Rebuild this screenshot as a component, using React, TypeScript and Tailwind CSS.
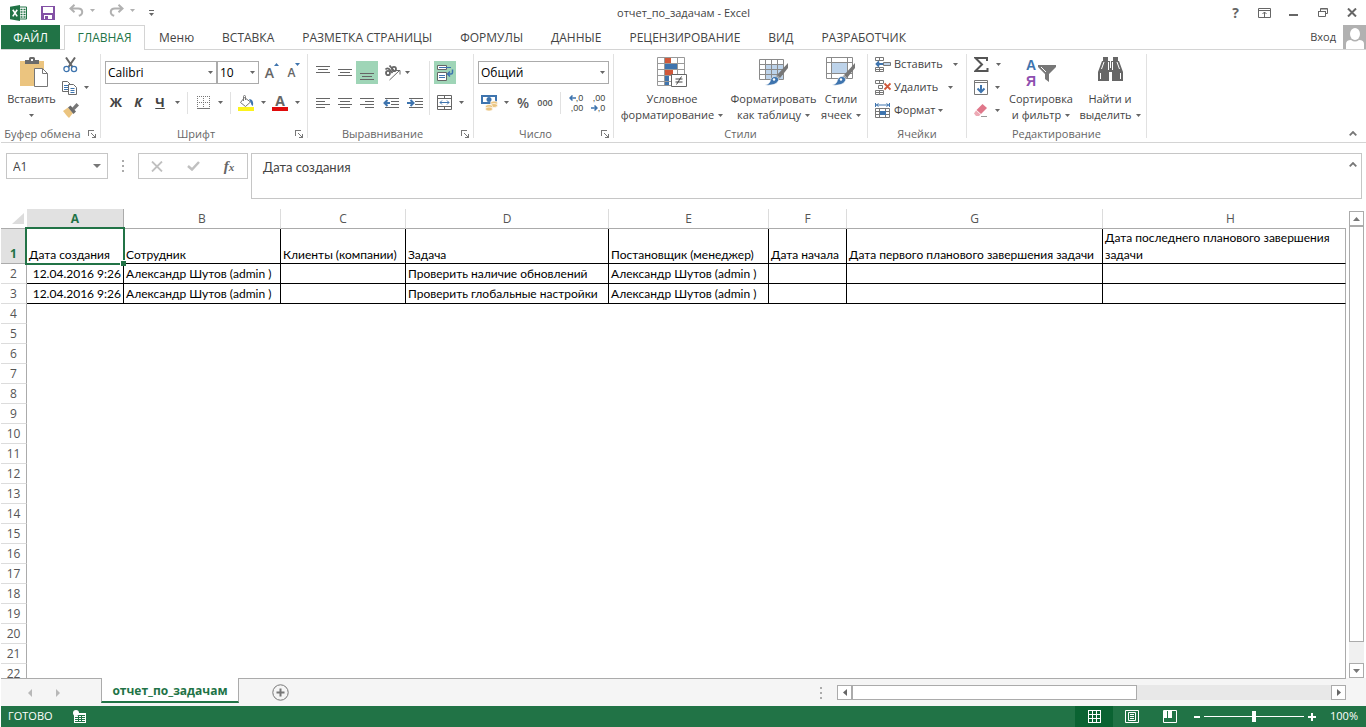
import React from 'react';
import type { ReactNode } from 'react';

const MENU_TABS = ['Меню', 'ВСТАВКА', 'РАЗМЕТКА СТРАНИЦЫ', 'ФОРМУЛЫ', 'ДАННЫЕ', 'РЕЦЕНЗИРОВАНИЕ', 'ВИД', 'РАЗРАБОТЧИК'];

const COLUMNS = [
  { id: 'A', width: 'w-[97px]' },
  { id: 'B', width: 'w-[157px]' },
  { id: 'C', width: 'w-[125px]' },
  { id: 'D', width: 'w-[203px]' },
  { id: 'E', width: 'w-[160px]' },
  { id: 'F', width: 'w-[78px]' },
  { id: 'G', width: 'w-[256px]' },
  { id: 'H', width: '' },
];

const HEADINGS = [
  'Дата создания',
  'Сотрудник',
  'Клиенты (компании)',
  'Задача',
  'Постановщик (менеджер)',
  'Дата начала',
  'Дата первого планового завершения задачи',
  'Дата последнего планового завершения задачи',
];

const ROWS = [
  ['12.04.2016 9:26', 'Александр Шутов (admin )', '', 'Проверить наличие обновлений', 'Александр Шутов (admin )', '', '', ''],
  ['12.04.2016 9:26', 'Александр Шутов (admin )', '', 'Проверить глобальные настройки', 'Александр Шутов (admin )', '', '', ''],
];

const EMPTY_ROWS = Array.from({ length: 19 }, (_, i) => i + 4);

/* ---------- small shared pieces ---------- */

function Arrow({ className = 'text-[#666]' }: { className?: string }) {
  return (
    <svg width="5" height="3" viewBox="0 0 5 3" className={`shrink-0 ${className}`} aria-hidden="true">
      <path d="M0 0h5L2.5 3z" fill="currentColor" />
    </svg>
  );
}

function Launcher({ label }: { label: string }) {
  return (
    <button type="button" aria-label={label} className="flex h-4 w-4 items-center justify-center text-[#777]">
      <svg width="8" height="8" viewBox="0 0 8 8" fill="none" stroke="currentColor" shapeRendering="crispEdges">
        <path d="M0.5 6V0.5H6M7.5 4v3.5H4" />
        <path d="M3 3l4 4" shapeRendering="auto" />
      </svg>
    </button>
  );
}

function Group({ label, width, launcher, children }: { label: string; width: string; launcher?: boolean; children: ReactNode }) {
  return (
    <section aria-label={label} className={`flex shrink-0 ${width}`}>
      <div className="flex min-w-0 flex-1 flex-col">
        <div className="flex h-[76px] pt-[3px]">{children}</div>
        <div className="flex h-4 items-center">
          <span className="flex-1 text-center text-[11px] leading-4 whitespace-nowrap text-[#666]">{label}</span>
          {launcher && <Launcher label={`Параметры: ${label}`} />}
        </div>
      </div>
      <div className="my-1 w-px bg-[#e1e1e1]" />
    </section>
  );
}

function Divider({ className = '' }: { className?: string }) {
  return <div className={`w-px shrink-0 bg-[#e1e1e1] ${className}`} />;
}

function Tool({ label, width = 'w-[22px]', active, children }: { label: string; width?: string; active?: boolean; children: ReactNode }) {
  return (
    <button
      type="button"
      aria-label={label}
      className={`flex h-[23px] shrink-0 items-center justify-center ${width} ${active ? 'bg-[#9fd5b7]' : ''}`}
    >
      {children}
    </button>
  );
}

function BigButton({ icon, lines, width }: { icon: ReactNode; lines: [string, string]; width: string }) {
  return (
    <button type="button" className={`flex shrink-0 flex-col items-center pt-1 text-[#444] ${width}`}>
      <span className="flex h-[34px] items-start justify-center">{icon}</span>
      <span className="leading-4 whitespace-nowrap">{lines[0]}</span>
      <span className="flex items-center gap-1 leading-4 whitespace-nowrap">
        {lines[1]}
        <Arrow />
      </span>
    </button>
  );
}

function Combo({ label, value, width }: { label: string; value: string; width: string }) {
  return (
    <div className={`relative h-[23px] shrink-0 ${width}`}>
      <select aria-label={label} defaultValue={value} className="h-full w-full appearance-none border border-[#ababab] bg-white pl-0.5 text-xs text-black outline-none">
        <option>{value}</option>
      </select>
      <Arrow className="pointer-events-none absolute top-2.5 right-1 text-[#666]" />
    </div>
  );
}

/* ---------- icons ---------- */

const ExcelLogo = () => (
  <svg width="17" height="16" viewBox="0 0 17 16">
    <path d="M9 2h7.5v12H9z" fill="#fff" stroke="#217346" />
    <path d="M10.5 4.5h2M13.5 4.5h2M10.5 7h2M13.5 7h2M10.5 9.5h2M13.5 9.5h2M10.5 12h2M13.5 12h2" stroke="#217346" strokeWidth="1.3" />
    <path d="M0 1.8L10 0v16L0 14.2z" fill="#217346" />
    <path d="M2.8 4.8l4.4 6.6M7.2 4.8l-4.4 6.6" stroke="#fff" strokeWidth="1.6" />
  </svg>
);

const SaveIcon = () => (
  <svg width="14" height="14" viewBox="0 0 14 14">
    <path d="M0 0h14v14H0z" fill="#8351a5" />
    <path d="M2 1h10v6H2zM3 9h8v4H3z" fill="#fff" />
    <path d="M4 10h3v3H4z" fill="#8351a5" />
  </svg>
);

const UndoIcon = ({ flip }: { flip?: boolean }) => (
  <svg width="15" height="13" viewBox="0 0 15 13" fill="none" stroke="#b1b1b1" strokeWidth="2" className={flip ? '-scale-x-100' : ''}>
    <path d="M5.5 0.8L1.5 4.5l4 3.7M1.8 4.5h7.4c5 0 5.5 5.8.6 7.3" />
  </svg>
);

const PasteIcon = () => (
  <svg width="28" height="31" viewBox="0 0 28 31">
    <path d="M0 4h24v25H0z" fill="#ebc47f" />
    <path d="M5 7V3h4V1.500Q9 0 10.500 0h3Q15 0 15 1.500V3h4v4z" fill="#6b6b6b" />
    <path d="M11 2h2v2h-2z" fill="#fff" />
    <path d="M14.500 11.500h8l5 5v13h-13z" fill="#fff" stroke="#777" />
    <path d="M22.500 11.500v5h5" fill="none" stroke="#777" />
  </svg>
);

const CutIcon = () => (
  <svg width="15" height="16" viewBox="0 0 15 16" fill="none">
    <path d="M3 0.500l6.500 9.500M12 0.500L5.500 10" stroke="#666" strokeWidth="2" />
    <circle cx="3.500" cy="12" r="2.600" stroke="#3e74ae" strokeWidth="1.300" />
    <circle cx="11" cy="12" r="2.600" stroke="#3e74ae" strokeWidth="1.300" />
  </svg>
);

const CopyIcon = () => (
  <svg width="16" height="14" viewBox="0 0 16 14" fill="#fff" stroke="#6b6b6b">
    <path d="M0.500 0.500h5l3 3v7h-8z" />
    <path d="M2 4.500h4M2 6.500h4M2 8.500h4" stroke="#3e74ae" />
    <path d="M6.500 3.500h5l3 3v7h-8z" />
    <path d="M8.500 7.500h4M8.500 9.500h4M8.500 11.500h4" stroke="#3e74ae" />
  </svg>
);

const BrushIcon = () => (
  <svg width="16" height="15" viewBox="0 0 16 15">
    <path d="M0 8l5-3.500 5 5.500-4 5-2-2z" fill="#ebc47f" />
    <path d="M5 4.500l2.500-2 5.500 6-2.500 2.500z" fill="#6b6b6b" />
    <path d="M9 5l4.500-5L16 2.500 11.500 7z" fill="#777" />
  </svg>
);

const GrowFont = ({ down }: { down?: boolean }) => (
  <span className="flex items-start text-[#666]">
    <span className={`font-semibold ${down ? 'text-xs leading-5' : 'text-sm leading-5'}`}>A</span>
    <svg width="5" height="4" viewBox="0 0 5 4" fill="#3e74ae">
      <path d={down ? 'M0 0h5L2.500 3z' : 'M0 3h5L2.500 0z'} />
    </svg>
  </span>
);

const BordersIcon = () => (
  <svg width="13" height="13" viewBox="0 0 13 13" stroke="#777" fill="none" shapeRendering="crispEdges">
    <path d="M0 0.500h13M0 6.500h13M0.500 0v12M6.500 0v12M12.500 0v12" strokeDasharray="1 1" />
    <path d="M0 12.500h13" />
  </svg>
);

const FillIcon = () => (
  <svg width="16" height="16" viewBox="0 0 16 16" fill="none">
    <path d="M0 12h16v4H0z" fill="#fcf31c" />
    <path d="M6.500 2.500l6 4.500-5 4.500L2.500 7.500z" fill="#fff" stroke="#777" />
    <path d="M5.500 6V1.500Q5.500.5 6.500.5T7.500 1.500V5" stroke="#777" />
    <path d="M11 4q5 0 4 7-2-1-2.500-4z" fill="#3e74ae" />
  </svg>
);

const FontColorIcon = () => (
  <span className="flex flex-col items-center">
    <span className="text-sm leading-3 font-bold text-[#666]">А</span>
    <span className="h-1 w-4 bg-[#e00b0b]" />
  </span>
);

const LINE_PATHS = {
  top: 'M0 1.500h14M2 4.500h10M0 7.500h14',
  middle: 'M0 4.500h14M2 7.500h10M0 10.500h14',
  bottom: 'M0 8.500h14M2 11.500h10M0 14.500h14',
  left: 'M0 3.500h14M0 6.500h9M0 9.500h14M0 12.500h9',
  center: 'M0 3.500h14M2 6.500h10M0 9.500h14M2 12.500h10',
  right: 'M0 3.500h14M5 6.500h9M0 9.500h14M5 12.500h9',
};

const LinesIcon = ({ kind }: { kind: keyof typeof LINE_PATHS }) => (
  <svg width="14" height="16" viewBox="0 0 14 16" stroke="#666" shapeRendering="crispEdges">
    <path d={LINE_PATHS[kind]} />
  </svg>
);

const IndentIcon = ({ out }: { out?: boolean }) => (
  <svg width="17" height="12" viewBox="0 0 17 12" fill="none">
    <path d="M2 1.500h14M8 4.500h8M8 7.500h8M2 10.500h14" stroke="#666" shapeRendering="crispEdges" />
    <path d="M0 3h7v6H0z" fill="#fff" />
    <path d={out ? 'M4.500 3L1.500 6l3 3M1.500 6H7' : 'M3.500 3l3 3-3 3M0 6h6.500'} stroke="#3e74ae" strokeWidth="2" />
  </svg>
);

const OrientationIcon = () => (
  <svg width="17" height="16" viewBox="0 0 17 16" fill="none" stroke="#666">
    <ellipse cx="4" cy="8" rx="2" ry="2.200" strokeWidth="1.800" />
    <path d="M1.500 4.500q1.500-2 3.500-.5L8.500 8" strokeWidth="1.800" />
    <path d="M5.500.500l5 6" strokeWidth="1.800" />
    <ellipse cx="10" cy="4" rx="2" ry="2.200" strokeWidth="1.800" />
    <path d="M5.500 15L15.500 5.500M12 5.500h4v4" />
  </svg>
);

const WrapIcon = () => (
  <svg width="17" height="16" viewBox="0 0 17 16" fill="none">
    <path d="M.5.500h9v4h-9zM.5 7.500h9v8h-9z" fill="#fff" stroke="#666" />
    <path d="M2 2.500h12M2 10.500h6M2 12.500h6" stroke="#3e74ae" />
    <path d="M15.500 4.500v3q0 1.500-1.500 1.500h-3M13 6.500L10.500 9l2.500 2.500" stroke="#3e74ae" strokeWidth="1.500" />
  </svg>
);

const MergeIcon = () => (
  <svg width="16" height="15" viewBox="0 0 16 15" fill="none" stroke="#666">
    <path d="M.5.500h14v14H.5zM0 3.500h15M0 11.500h15M7.500 0v3.500M7.500 11.500V15" />
    <path d="M3 7.500h9M5 5.500l-2 2 2 2M10 5.500l2 2-2 2" stroke="#3e74ae" />
  </svg>
);

const MoneyIcon = () => (
  <svg width="17" height="16" viewBox="0 0 17 16">
    <path d="M0 0h16v9H0z" fill="#3e74ae" />
    <path d="M2 2h12v5H2z" fill="#fff" />
    <circle cx="8" cy="4.500" r="2.500" fill="#3e74ae" />
    <ellipse cx="13" cy="8" rx="3.500" ry="2" fill="#ebc47f" stroke="#fff" strokeWidth=".7" />
    <ellipse cx="13" cy="10.500" rx="3.500" ry="2" fill="#ebc47f" stroke="#fff" strokeWidth=".7" />
    <ellipse cx="8" cy="11.500" rx="3.500" ry="2" fill="#ebc47f" stroke="#fff" strokeWidth=".7" />
    <ellipse cx="8" cy="14" rx="3.500" ry="2" fill="#ebc47f" stroke="#fff" strokeWidth=".7" />
  </svg>
);

const ArrowStroke = ({ right }: { right?: boolean }) => (
  <svg width="7" height="6" viewBox="0 0 7 6" fill="none" stroke="#3e74ae" strokeWidth="1.500" className={right ? '-scale-x-100' : ''}>
    <path d="M3.500.5L1 3l2.500 2.500M1 3h6" />
  </svg>
);

const DecimalIcon = ({ less }: { less?: boolean }) => (
  <span className="flex flex-col font-['Liberation_Sans',sans-serif] text-[9px] leading-[10px] text-[#444]">
    <span className="flex items-center justify-end">
      {!less && <ArrowStroke />}
      {less ? ',00' : ',0'}
    </span>
    <span className="flex items-center justify-end">
      {less && <ArrowStroke right />}
      {less ? ',0' : ',00'}
    </span>
  </span>
);

const ConditionalIcon = () => (
  <svg width="30" height="30" viewBox="0 0 30 30">
    <path d="M.5.500h27v23H.5z" fill="#fff" />
    <path d="M8 1h6v5H8z" fill="#d0583a" />
    <path d="M8 7h12v5H8z" fill="#3e74ae" />
    <path d="M8 13h8v5H8z" fill="#d0583a" />
    <path d="M8 19h4v10H8z" fill="#3e74ae" />
    <path d="M.5.500h27v28H.5zM7.500 0v29M20.500 0v29M0 6.500h28M0 12.500h28M0 18.500h28M0 24.500h28" fill="none" stroke="#999" />
    <path d="M14.500 17.500h15v12h-15z" fill="#fff" stroke="#666" />
    <path d="M18.500 22h7M18.500 25h7M24.500 19.500l-5 8" stroke="#444" />
  </svg>
);

const BrushOver = () => (
  <>
    <path d="M29 6v5l-8 10-3-3z" fill="#777" />
    <path d="M18 18l3 3-2 2-3-3z" fill="#999" />
    <path d="M15 19.500q5 0 4.500 4Q17 29 6 28q5-1 5.500-5 1-3 3.500-3.500z" fill="#3e74ae" stroke="#fff" strokeWidth=".5" />
    <circle cx="15" cy="22.500" r="1.200" fill="#fff" />
  </>
);

const FormatTableIcon = () => (
  <svg width="30" height="30" viewBox="0 0 30 30">
    <path d="M.5 2.500h24v19H.5z" fill="#fff" />
    <path d="M7 8h17v14H7z" fill="#bdd3ea" />
    <path d="M.5 2.500h24v20H.5zM6.500 2v20M12.500 2v20M18.500 2v20M0 7.500h25M0 12.500h25M0 17.500h25" fill="none" stroke="#8a8a8a" />
    <BrushOver />
  </svg>
);

const CellStylesIcon = () => (
  <svg width="30" height="30" viewBox="0 0 30 30">
    <path d="M.5.500h26v21H.5z" fill="#fff" />
    <path d="M6 6h15v10H6z" fill="#bdd3ea" />
    <path d="M.5.500h26v21H.5zM5.500 0v22M21.500 0v22M0 5.500h27M0 16.500h27" fill="none" stroke="#8a8a8a" />
    <BrushOver />
  </svg>
);

const InsertCellsIcon = () => (
  <svg width="16" height="15" viewBox="0 0 16 15" fill="none" stroke="#777">
    <path d="M.5.500h8v3h-8zM4.500 0v4M.5 10.500h8v4h-8zM4.500 10v5M0 12.500h8" />
    <path d="M8.500 5.500h7v3h-7z" fill="#bdd3ea" />
    <path d="M4 4.500L1.500 7 4 9.500M1.500 7H8" stroke="#3e74ae" strokeWidth="1.800" />
  </svg>
);

const DeleteCellsIcon = () => (
  <svg width="16" height="15" viewBox="0 0 16 15" fill="none" stroke="#777">
    <path d="M.5.500h8v3h-8zM4.500 0v4M3.500 5.500h4v3h-4zM.5 10.500h8v4h-8zM4.500 10v5M0 12.500h8" />
    <path d="M9.500 3.500l6 6M15.500 3.500l-6 6" stroke="#d0583a" strokeWidth="1.800" />
  </svg>
);

const FormatCellsIcon = () => (
  <svg width="16" height="16" viewBox="0 0 16 16" fill="none" stroke="#777">
    <path d="M.5 0v4M14.500 0v4M1 2h13M3.500 0.500L1.500 2l2 1.500M11.500.5l2 1.500-2 1.500" stroke="#3e74ae" />
    <path d="M.5 5.500h14v9H.5zM4.500 5v10M10.500 5v10M0 8.500h15M0 11.500h15" />
    <path d="M5 8h6v4H5z" fill="#3e74ae" stroke="none" />
  </svg>
);

const SumIcon = () => (
  <svg width="15" height="15" viewBox="0 0 15 15" fill="none" stroke="#555" strokeWidth="2">
    <path d="M13 4V1H1.500L8 7.500 1.500 14H13.500v-3" />
  </svg>
);

const FillDownIcon = () => (
  <svg width="14" height="15" viewBox="0 0 14 15" fill="none">
    <path d="M.5.500h13v14H.5zM0 2.500h14" stroke="#777" />
    <path d="M7 5v7M3.500 8.500L7 12l3.500-3.500" stroke="#3e74ae" strokeWidth="2" />
  </svg>
);

const EraserIcon = () => (
  <svg width="14" height="13" viewBox="0 0 14 13">
    <path d="M8.500 0L13 4 7 10 2.500 6z" fill="#e0778a" />
    <path d="M2 6.500L6.500 10.500 5 12H2L0 9.500z" fill="#edaab5" />
    <path d="M7 12.500h6" stroke="#999" />
  </svg>
);

const SortIcon = () => (
  <span className="flex items-center gap-0.5">
    <span className="flex flex-col font-['Liberation_Sans',sans-serif] text-sm leading-4 font-bold">
      <span className="text-[#3e74ae]">А</span>
      <span className="text-[#8f4fb0]">Я</span>
    </span>
    <svg width="18" height="17" viewBox="0 0 18 17">
      <path d="M0 0h18v2l-7 7v8l-4-3V9L0 2z" fill="#777" />
      <path d="M3 2l5 5" stroke="#fff" />
    </svg>
  </span>
);

const BinocularsIcon = () => (
  <svg width="27" height="25" viewBox="0 0 27 25" fill="#666">
    <path d="M6 0h5v4h2v7h1V4h2V0h5v4h1l4 11v9H15v-9h-3v9H1v-9L5 4h1z" />
    <path d="M3.500 16v6M23.500 16v6M7 5L4.500 12M20 5l2.500 7M11.500 5v8M15.500 5v8" stroke="#fff" />
  </svg>
);

const CollapseIcon = () => (
  <svg width="8" height="5" viewBox="0 0 8 5" fill="none" stroke="#777" strokeWidth="1.800">
    <path d="M.7 4.300L4 1l3.300 3.300" />
  </svg>
);

const Dots = () => (
  <svg width="2" height="12" viewBox="0 0 2 12" fill="#ababab">
    <path d="M0 0h2v2H0zM0 5h2v2H0zM0 10h2v2H0z" />
  </svg>
);

/* ---------- window sections ---------- */

function TitleBar() {
  return (
    <header className="grid h-[25px] shrink-0 grid-cols-[1fr_auto_1fr] items-center text-[#666]">
      <div className="flex items-center pl-[9px]">
        <ExcelLogo />
        <button type="button" aria-label="Сохранить" className="ml-[14px]"><SaveIcon /></button>
        <button type="button" aria-label="Отменить" className="ml-[14px] flex items-center gap-[6px] pb-1">
          <UndoIcon />
          <Arrow className="text-[#b1b1b1]" />
        </button>
        <button type="button" aria-label="Вернуть" className="ml-[14px] flex items-center gap-[6px] pb-1">
          <UndoIcon flip />
          <Arrow className="text-[#b1b1b1]" />
        </button>
        <button type="button" aria-label="Настройка панели быстрого доступа" className="ml-[14px] flex flex-col items-center gap-0.5">
          <span className="h-px w-[5px] bg-[#666]" />
          <Arrow />
        </button>
      </div>
      <h1 className="pt-0.5 text-[11px] text-[#444]">отчет_по_задачам - Excel</h1>
      <div className="flex items-center justify-end pr-[9px]">
        <button type="button" className="w-[29px] text-sm leading-5 font-bold" aria-label="Справка">?</button>
        <button type="button" aria-label="Параметры ленты" className="flex w-[29px] justify-center">
          <svg width="13" height="10" viewBox="0 0 13 10" fill="none" stroke="#666">
            <path d="M.5.500h12v9H.5zM0 2.500h13M6.500 4v5M4.500 6l2-2 2 2" />
          </svg>
        </button>
        <button type="button" aria-label="Свернуть" className="flex w-[29px] justify-center">
          <span className="mt-1 h-0.5 w-[9px] bg-[#666]" />
        </button>
        <button type="button" aria-label="Восстановить" className="flex w-[29px] justify-center">
          <svg width="10" height="9" viewBox="0 0 10 9" fill="none" stroke="#666">
            <path d="M.5 3.500h7v5h-7zM2.500 3V.5h7v5H8M0 3.500h8M2.500 1h7" />
          </svg>
        </button>
        <button type="button" aria-label="Закрыть" className="flex w-5 justify-end">
          <svg width="10" height="9" viewBox="0 0 10 9" stroke="#666" strokeWidth="2">
            <path d="M1 .5l8 8M9 .5l-8 8" />
          </svg>
        </button>
      </div>
    </header>
  );
}

function RibbonTabs() {
  return (
    <nav className="flex h-[25px] shrink-0 text-xs text-[#444]">
      <button type="button" className="w-[59px] border-b border-[#d4d4d4] bg-[#217346] pt-px text-white">ФАЙЛ</button>
      <div className="w-1 border-b border-[#d4d4d4]" />
      <button type="button" className="w-[81px] border border-b-0 border-[#d4d4d4] text-[#217346]">ГЛАВНАЯ</button>
      {MENU_TABS.map((tab) => (
        <button key={tab} type="button" className="border-b border-[#d4d4d4] px-[14px] pt-0.5 whitespace-nowrap">{tab}</button>
      ))}
      <div className="flex flex-1 items-center justify-end gap-[7px] border-b border-[#d4d4d4]">
        <a href="#signin" className="text-[11px]">Вход</a>
        <svg width="23" height="24" viewBox="0 0 23 24">
          <path d="M0 0h23v24H0z" fill="#b1b1b1" />
          <ellipse cx="12" cy="9" rx="5" ry="6" fill="#fff" />
          <path d="M3 24v-5q0-4 5-4 4 3 8 0 5 0 5 4v5z" fill="#fff" />
        </svg>
      </div>
    </nav>
  );
}

function Ribbon() {
  return (
    <div className="flex h-[93px] shrink-0 overflow-hidden border-b border-[#d4d4d4] text-[11px]">
      <Group label="Буфер обмена" width="w-[100px]" launcher>
        <button type="button" className="flex w-[61px] flex-col items-center pt-1 text-[#444]">
          <span className="flex h-[34px] items-start pl-1"><PasteIcon /></span>
          <span className="leading-4">Вставить</span>
          <span className="flex h-4 items-center"><Arrow /></span>
        </button>
        <div className="flex flex-col">
          <Tool label="Вырезать" width="w-[17px]"><CutIcon /></Tool>
          <button type="button" aria-label="Копировать" className="flex h-[23px] items-center gap-1.5">
            <CopyIcon />
            <Arrow />
          </button>
          <Tool label="Формат по образцу" width="w-[17px]"><BrushIcon /></Tool>
        </div>
      </Group>

      <Group label="Шрифт" width="w-[207px]" launcher>
        <div className="flex flex-col gap-[7px] pt-2 pl-1">
          <div className="flex">
            <Combo label="Шрифт" value="Calibri" width="w-[112px]" />
            <Combo label="Размер шрифта" value="10" width="w-[42px]" />
            <Tool label="Увеличить размер шрифта" width="w-[26px]"><GrowFont /></Tool>
            <Tool label="Уменьшить размер шрифта" width="w-[18px]"><GrowFont down /></Tool>
          </div>
          <div className="flex items-center">
            <Tool label="Полужирный"><b className="text-[13px] text-[#444]">Ж</b></Tool>
            <Tool label="Курсив"><b className="text-[13px] text-[#444] italic">К</b></Tool>
            <Tool label="Подчеркнутый"><b className="text-[13px] text-[#444] underline">Ч</b></Tool>
            <Tool label="Вид подчеркивания" width="w-3"><Arrow /></Tool>
            <Divider className="mx-1 h-[22px]" />
            <Tool label="Границы"><BordersIcon /></Tool>
            <Tool label="Вид границ" width="w-3"><Arrow /></Tool>
            <Divider className="mx-1 h-[22px]" />
            <Tool label="Цвет заливки"><FillIcon /></Tool>
            <Tool label="Выбор цвета заливки" width="w-3"><Arrow /></Tool>
            <Tool label="Цвет шрифта"><FontColorIcon /></Tool>
            <Tool label="Выбор цвета шрифта" width="w-3"><Arrow /></Tool>
          </div>
        </div>
      </Group>

      <Group label="Выравнивание" width="w-[166px]" launcher>
        <div className="flex flex-col gap-[7px] pt-2 pl-1">
          <div className="flex w-[117px]">
            <Tool label="По верхнему краю"><LinesIcon kind="top" /></Tool>
            <Tool label="По середине"><LinesIcon kind="middle" /></Tool>
            <Tool label="По нижнему краю" active><LinesIcon kind="bottom" /></Tool>
            <Tool label="Ориентация" width="w-[38px]">
              <span className="flex items-center gap-1"><OrientationIcon /><Arrow /></span>
            </Tool>
          </div>
          <div className="flex w-[117px]">
            <Tool label="По левому краю"><LinesIcon kind="left" /></Tool>
            <Tool label="По центру"><LinesIcon kind="center" /></Tool>
            <Tool label="По правому краю"><LinesIcon kind="right" /></Tool>
            <Tool label="Уменьшить отступ" width="w-[26px]"><IndentIcon out /></Tool>
            <Tool label="Увеличить отступ"><IndentIcon /></Tool>
          </div>
        </div>
        <Divider className="mt-2 mr-1 h-[54px]" />
        <div className="flex flex-col gap-[7px] pt-2">
          <Tool label="Перенести текст" active><WrapIcon /></Tool>
          <button type="button" aria-label="Объединить" className="flex h-[23px] items-center gap-1.5 pl-[3px]">
            <MergeIcon />
            <Arrow />
          </button>
        </div>
      </Group>

      <Group label="Число" width="w-[140px]" launcher>
        <div className="flex flex-col gap-[7px] pt-2 pl-1">
          <Combo label="Числовой формат" value="Общий" width="w-[131px]" />
          <div className="flex items-center">
            <Tool label="Финансовый формат"><MoneyIcon /></Tool>
            <Tool label="Выбор валюты" width="w-3"><Arrow /></Tool>
            <Tool label="Процентный формат"><span className="text-sm font-semibold text-[#555]">%</span></Tool>
            <Tool label="Формат с разделителями"><span className="text-[9px] font-semibold text-[#555]">000</span></Tool>
            <Divider className="mx-1 h-[22px]" />
            <Tool label="Увеличить разрядность"><DecimalIcon /></Tool>
            <Tool label="Уменьшить разрядность"><DecimalIcon less /></Tool>
          </div>
        </div>
      </Group>

      <Group label="Стили" width="w-[254px]">
        <BigButton icon={<ConditionalIcon />} lines={['Условное', 'форматирование']} width="w-[116px]" />
        <BigButton icon={<FormatTableIcon />} lines={['Форматировать', 'как таблицу']} width="w-[87px]" />
        <BigButton icon={<CellStylesIcon />} lines={['Стили', 'ячеек']} width="w-[48px]" />
      </Group>

      <Group label="Ячейки" width="w-[99px]">
        <div className="flex flex-col pl-[7px] text-[#444]">
          <button type="button" className="flex h-[23px] items-center gap-[3px]">
            <InsertCellsIcon /> Вставить <Arrow className="ml-[7px] text-[#666]" />
          </button>
          <button type="button" className="flex h-[23px] items-center gap-[3px]">
            <DeleteCellsIcon /> Удалить <Arrow className="ml-[7px] text-[#666]" />
          </button>
          <button type="button" className="flex h-[23px] items-center gap-[3px]">
            <FormatCellsIcon /> Формат <Arrow />
          </button>
        </div>
      </Group>

      <Group label="Редактирование" width="w-[180px]">
        <div className="flex flex-col pl-[7px]">
          <button type="button" aria-label="Автосумма" className="flex h-[23px] items-center gap-[7px]"><SumIcon /><Arrow /></button>
          <button type="button" aria-label="Заполнить" className="flex h-[23px] items-center gap-[7px]"><FillDownIcon /><Arrow /></button>
          <button type="button" aria-label="Очистить" className="flex h-[23px] items-center gap-[7px]"><EraserIcon /><Arrow /></button>
        </div>
        <BigButton icon={<SortIcon />} lines={['Сортировка', 'и фильтр']} width="w-[80px]" />
        <BigButton icon={<BinocularsIcon />} lines={['Найти и', 'выделить']} width="w-[58px]" />
      </Group>

      <div className="flex flex-1 items-end justify-end pr-[9px] pb-1.5">
        <button type="button" aria-label="Свернуть ленту"><CollapseIcon /></button>
      </div>
    </div>
  );
}

function FormulaBar() {
  return (
    <div className="flex h-[66px] shrink-0 items-start pt-2.5 pr-1 pl-[5px] text-xs text-[#444]">
      <div className="flex h-[26px] w-[102px] items-center border border-[#c6c6c6] pr-1.5 pl-1.5">
        <input aria-label="Поле имени" defaultValue="A1" className="w-full min-w-0 pt-0.5 outline-none" />
        <button type="button" aria-label="Имена">
          <svg width="8" height="4" viewBox="0 0 8 4"><path d="M0 0h8L4 4z" fill="#777" /></svg>
        </button>
      </div>
      <div className="flex h-[26px] w-[30px] items-center justify-center"><Dots /></div>
      <div className="flex h-[26px] w-[110px] items-center border border-[#c6c6c6]">
        <button type="button" aria-label="Отмена" className="flex flex-1 justify-center">
          <svg width="12" height="11" viewBox="0 0 12 11" stroke="#c0c0c0" strokeWidth="1.800"><path d="M1 .5l10 10M11 .5l-10 10" /></svg>
        </button>
        <button type="button" aria-label="Ввод" className="flex flex-1 justify-center">
          <svg width="13" height="10" viewBox="0 0 13 10" fill="none" stroke="#c0c0c0" strokeWidth="2.500"><path d="M1 5l4 3.500L12 1" /></svg>
        </button>
        <button type="button" aria-label="Вставить функцию" className="flex-1 font-['Liberation_Serif',serif] text-[15px] leading-5 font-bold text-[#666] italic">
          f<span className="text-[11px]">x</span>
        </button>
      </div>
      <div className="ml-[3px] flex h-[46px] flex-1 items-start border border-[#c6c6c6] pr-1">
        <textarea aria-label="Строка формул" defaultValue="Дата создания" className="h-full flex-1 resize-none pt-1 pl-[11px] font-['Lato',sans-serif] text-[13px] leading-[18px] outline-none" />
        <button type="button" aria-label="Свернуть строку формул" className="mt-2"><CollapseIcon /></button>
      </div>
    </div>
  );
}

function SheetGrid() {
  return (
    <main className="flex min-h-0 flex-1">
      <div className="min-w-0 flex-1 overflow-hidden">
        <table className="w-full table-fixed border-separate border-spacing-0 text-xs text-black">
          <colgroup>
            <col className="w-[26px]" />
            {COLUMNS.map((col) => <col key={col.id} className={col.width} />)}
          </colgroup>
          <thead>
            <tr className="h-5 text-[#555]">
              <th className="border-b border-[#ababab] p-0">
                <svg width="12" height="11" viewBox="0 0 12 11" className="ml-auto mr-[3px]"><path d="M12 0v11H0z" fill="#dcdcdc" /></svg>
              </th>
              {COLUMNS.map((col) => (
                <th
                  key={col.id}
                  scope="col"
                  className={
                    col.id === 'A'
                      ? 'border-r border-b border-[#ababab] bg-[#e1e1e1] p-0 font-bold text-[#217346]'
                      : 'border-r border-b border-r-[#dcdcdc] border-b-[#ababab] p-0 font-normal last:border-r-0 last:pl-3'
                  }
                >
                  {col.id}
                </th>
              ))}
            </tr>
          </thead>
          <tbody>
            <tr className="h-[35px]">
              <th scope="row" className="border-r border-b border-[#ababab] bg-[#e1e1e1] p-0 align-bottom leading-[18px] font-bold text-[#217346]">1</th>
              {HEADINGS.map((text, i) => (
                <td
                  key={text}
                  className={`relative border-r border-b border-black p-0 pl-0.5 align-bottom font-['Lato',sans-serif] leading-[17px] last:border-r-[#ababab] ${i < 7 ? 'whitespace-nowrap' : ''}`}
                >
                  {text}
                  {i === 0 && (
                    <div className="absolute -inset-0.5 z-10 border-2 border-[#217346]">
                      <span className="absolute -right-[3px] -bottom-[3px] h-1.5 w-1.5 border-t border-l border-white bg-[#217346]" />
                    </div>
                  )}
                </td>
              ))}
            </tr>
            {ROWS.map((row, r) => (
              <tr key={r} className="h-5">
                <th scope="row" className="border-r border-b border-r-[#ababab] border-b-[#dcdcdc] p-0 leading-[19px] font-normal text-[#555]">{r + 2}</th>
                {row.map((text, i) => (
                  <td
                    key={i}
                    className={`border-r border-b border-black p-0 font-['Lato',sans-serif] leading-[19px] whitespace-nowrap last:border-r-[#ababab] ${i === 0 ? 'pr-0.5 text-right' : 'pl-0.5'}`}
                  >
                    {text}
                  </td>
                ))}
              </tr>
            ))}
            {EMPTY_ROWS.map((n) => (
              <tr key={n} className="h-5">
                <th scope="row" className="border-r border-b border-r-[#ababab] border-b-[#dcdcdc] p-0 leading-[19px] font-normal text-[#555]">{n}</th>
                <td colSpan={8} className="border-r border-[#ababab] p-0" />
              </tr>
            ))}
          </tbody>
        </table>
      </div>
      <div className="mt-0.5 mr-[2px] ml-[3px] flex w-[15px] flex-col bg-[#f0f0f0]">
        <button type="button" aria-label="Прокрутить вверх" className="flex h-[15px] items-center justify-center border border-[#ababab] bg-white">
          <svg width="7" height="4" viewBox="0 0 7 4"><path d="M0 4h7L3.500 0z" fill="#777" /></svg>
        </button>
        <div className="grow-[20] border border-[#ababab] bg-white" />
        <div className="grow" />
        <button type="button" aria-label="Прокрутить вниз" className="flex h-[15px] items-center justify-center border border-[#ababab] bg-white">
          <svg width="7" height="4" viewBox="0 0 7 4"><path d="M0 0h7L3.500 4z" fill="#777" /></svg>
        </button>
      </div>
    </main>
  );
}

function SheetTabs() {
  return (
    <div className="flex h-7 shrink-0 bg-[#f5f5f5] pr-5">
      <div className="flex w-[100px] items-center gap-6 border-t border-[#ababab] pl-[27px]">
        <button type="button" aria-label="Предыдущий лист"><svg width="4" height="8" viewBox="0 0 4 8"><path d="M4 0v8L0 4z" fill="#b8b8b8" /></svg></button>
        <button type="button" aria-label="Следующий лист"><svg width="4" height="8" viewBox="0 0 4 8"><path d="M0 0v8l4-4z" fill="#b8b8b8" /></svg></button>
      </div>
      <button type="button" className="h-[25px] w-[138px] border-x border-b-2 border-x-[#ababab] border-b-[#217346] bg-white pt-0.5 text-xs font-bold text-[#217346]">
        отчет_по_задачам
      </button>
      <div className="flex flex-1 items-center border-t border-[#ababab] pl-[33px]">
        <button type="button" aria-label="Новый лист">
          <svg width="17" height="17" viewBox="0 0 17 17" fill="none" stroke="#777">
            <circle cx="8.500" cy="8.500" r="7.700" />
            <path d="M8.500 4.500v8M4.500 8.500h8" strokeWidth="2" />
          </svg>
        </button>
        <div className="ml-auto flex w-[526px] items-center gap-[15px]">
          <Dots />
          <div className="flex h-[15px] flex-1 bg-[#e8e8e8]">
            <button type="button" aria-label="Прокрутить влево" className="flex w-[15px] items-center justify-center border border-[#ababab] bg-white">
              <svg width="4" height="7" viewBox="0 0 4 7"><path d="M4 0v7L0 3.500z" fill="#666" /></svg>
            </button>
            <div className="w-[56%] border border-[#ababab] bg-white" />
            <button type="button" aria-label="Прокрутить вправо" className="ml-auto flex w-[15px] items-center justify-center border border-[#ababab] bg-white">
              <svg width="4" height="7" viewBox="0 0 4 7"><path d="M0 0v7l4-3.500z" fill="#666" /></svg>
            </button>
          </div>
        </div>
      </div>
    </div>
  );
}

function StatusBar() {
  return (
    <footer className="flex h-[21px] shrink-0 items-center bg-[#217346] pl-[7px] text-[11px] text-white">
      <span>ГОТОВО</span>
      <button type="button" aria-label="Запись макроса" className="ml-5">
        <svg width="13" height="13" viewBox="0 0 13 13" fill="#fff">
          <path d="M1 3h12v10H1z" />
          <path d="M2 5.500h10M2 7.500h10M2 9.500h10M2 11.500h10M5.500 5v7M8.500 5v7" stroke="#217346" />
          <circle cx="3" cy="3" r="3" />
        </svg>
      </button>
      <div className="ml-auto flex h-full items-center">
        <button type="button" aria-label="Обычный" className="flex h-full w-[38px] items-center justify-center bg-[#0a6332]">
          <svg width="13" height="13" viewBox="0 0 13 13" fill="none" stroke="#fff" shapeRendering="crispEdges"><path d="M.5.500h12v12H.5zM4.500 0v13M8.500 0v13M0 4.500h13M0 8.500h13" /></svg>
        </button>
        <button type="button" aria-label="Разметка страницы" className="flex h-full w-[38px] items-center justify-center">
          <svg width="14" height="13" viewBox="0 0 14 13" fill="none" stroke="#fff"><path d="M.5.500h13v12H.5zM3.500 2.500h7v8h-7zM5 4.500h4M5 6.500h4M5 8.500h4" /></svg>
        </button>
        <button type="button" aria-label="Страничный режим" className="flex h-full w-[38px] items-center justify-center">
          <svg width="14" height="13" viewBox="0 0 14 13" fill="none" stroke="#fff"><path d="M.5.500h13v12H.5z" /><path d="M1 1h3v7H1zM5 1h4v7H5z" fill="#fff" stroke="none" /></svg>
        </button>
        <button type="button" aria-label="Уменьшить масштаб" className="ml-[5px]">
          <span className="block h-0.5 w-1.5 bg-white" />
        </button>
        <input
          type="range"
          aria-label="Масштаб"
          defaultValue={50}
          className="mx-1 h-3 w-[100px] appearance-none bg-[linear-gradient(#fff,#fff)] bg-[length:100%_1px] bg-center bg-no-repeat [&::-webkit-slider-thumb]:h-[11px] [&::-webkit-slider-thumb]:w-1 [&::-webkit-slider-thumb]:appearance-none [&::-webkit-slider-thumb]:bg-white"
        />
        <button type="button" aria-label="Увеличить масштаб">
          <svg width="8" height="8" viewBox="0 0 8 8" stroke="#fff" strokeWidth="2"><path d="M4 0v8M0 4h8" /></svg>
        </button>
        <span className="w-[50px] pr-2 text-right">100%</span>
      </div>
    </footer>
  );
}

export default function App() {
  return (
    <div className="flex h-screen flex-col overflow-hidden bg-white pl-px font-['Open_Sans','Noto_Sans',sans-serif]">
      <TitleBar />
      <RibbonTabs />
      <Ribbon />
      <FormulaBar />
      <SheetGrid />
      <SheetTabs />
      <StatusBar />
    </div>
  );
}
